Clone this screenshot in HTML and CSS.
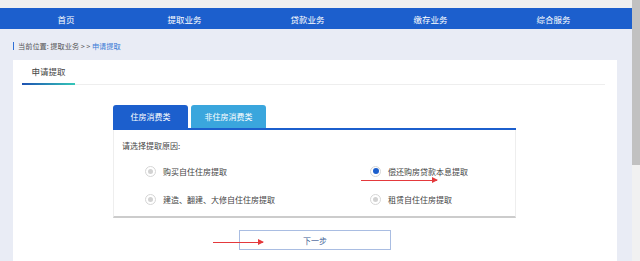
FILE: index.html
```html
<!DOCTYPE html>
<html lang="zh-CN">
<head>
  <meta charset="UTF-8">
  <meta name="viewport" content="width=device-width, initial-scale=1.0">
  <title>申请提取</title>
  <link rel="stylesheet" href="styles.css">
</head>
<body>
<div class="page">
  <div class="topbar"></div>
  <div class="nav">
    <a class="nav-item">首页</a>
    <a class="nav-item">提取业务</a>
    <a class="nav-item">贷款业务</a>
    <a class="nav-item">缴存业务</a>
    <a class="nav-item">综合服务</a>
  </div>

  <div class="crumb">
    <span class="crumb-mark"></span>
    <span>当前位置: 提取业务 &gt; &gt; </span><span class="crumb-current">申请提取</span>
  </div>

  <div class="panel">
    <div class="panel-tabs">
      <span class="panel-tab">申请提取</span>
    </div>

    <div class="form">
      <div class="cat-tabs">
        <span class="cat-tab active">住房消费类</span>
        <span class="cat-tab">非住房消费类</span>
      </div>
      <div class="cat-box">
        <div class="prompt">请选择提取原因:</div>
        <div class="options">
          <label class="option"><span class="radio"></span>购买自住住房提取</label>
          <label class="option"><span class="radio checked"></span>偿还购房贷款本息提取</label>
          <label class="option"><span class="radio"></span>建造、翻建、大修自住住房提取</label>
          <label class="option"><span class="radio"></span>租赁自住住房提取</label>
        </div>
      </div>
      <button class="next-btn">下一步</button>

      <!-- annotation arrows drawn over the form -->
      <span class="arrow arrow-option"></span>
      <span class="arrow arrow-next"></span>
    </div>
  </div>
</div>
<div class="scrollbar"><div class="scroll-thumb"></div></div>
</body>
</html>
```

FILE: styles.css
```css
html, body {
  margin: 0;
  height: 261px;
  overflow: hidden;
}
body {
  display: flex;
  background: #e9ecf5;
  font-family: "Noto Sans CJK SC", "Noto Sans", sans-serif;
  font-size: 8px;
  color: #444;
}
.page {
  flex: 1;
  display: flex;
  flex-direction: column;
}
.topbar {
  height: 8px;
  background: #f0f0f0;
}
.nav {
  height: 21px;
  background: #1c5fcd;
  display: flex;
  align-items: center;
  padding-left: 6px;
}
.nav-item {
  width: 123px;
  text-align: center;
  color: #fff;
  font-size: 8.5px;
}
.nav-item:first-child {
  width: 114px;
  margin-left: 3px;
}
.crumb {
  height: 31px;
  display: flex;
  align-items: center;
  padding-left: 13px;
  padding-top: 3px;
  box-sizing: border-box;
  color: #555;
  font-size: 7.2px;
  white-space: pre;
}
.crumb-mark {
  width: 1px;
  height: 8px;
  background: #2f6fd6;
  margin-right: 4px;
}
.crumb-current {
  color: #3a7bd5;
}
.panel {
  flex: 1;
  background: #fff;
  margin-left: 13px;
  width: 604px;
  position: relative;
}
.panel-tabs {
  height: 24px;
  margin: 0 12px 0 9px;
  border-bottom: 1px solid #eeeeee;
  display: flex;
  align-items: flex-end;
}
.panel-tab {
  width: 53px;
  text-align: center;
  font-size: 8.5px;
  color: #444;
  padding-bottom: 6px;
  margin-bottom: -1px;
  border-bottom: 2px solid transparent;
  border-image: linear-gradient(90deg, #1d4fb2, #35c9b8) 1;
}
.form {
  position: relative;
  margin: 20px 0 0 100px;
  width: 403px;
}
.cat-tabs {
  display: flex;
  gap: 3px;
  border-bottom: 2px solid #1c5fcd;
}
.cat-tab {
  width: 75px;
  height: 23px;
  line-height: 23px;
  text-align: center;
  color: #fff;
  background: #3aa6dd;
  border-radius: 3px 3px 0 0;
}
.cat-tab.active {
  background: #1c5fcd;
}
.cat-box {
  border: 1px solid #eeeeee;
  border-top: none;
  border-bottom: 2px solid #cccccc;
  padding: 10px 0 3px 8px;
}
.prompt {
  line-height: 12px;
  margin-bottom: 5px;
}
.options {
  display: grid;
  grid-template-columns: 225px 1fr;
  padding-left: 23px;
}
.option {
  display: flex;
  align-items: center;
  height: 28px;
}
.radio {
  width: 9px;
  height: 9px;
  border: 1px solid #d6d6d6;
  border-radius: 50%;
  margin-right: 7px;
  display: flex;
  align-items: center;
  justify-content: center;
}
.radio::after {
  content: "";
  width: 5px;
  height: 5px;
  border-radius: 50%;
  background: #d2d2d2;
}
.radio.checked::after {
  width: 6px;
  height: 6px;
  background: #1c5fcd;
}
.next-btn {
  display: block;
  margin: 12px 0 0 126px;
  width: 152px;
  height: 20px;
  border: 1px solid #a9bde2;
  background: #fff;
  color: #3d5d95;
  font-family: inherit;
  font-size: 8px;
  padding: 0;
}
.arrow {
  position: absolute;
  height: 1px;
  background: #e4393c;
}
.arrow::after {
  content: "";
  position: absolute;
  right: -1px;
  top: -3px;
  border-left: 6px solid #e4393c;
  border-top: 3.5px solid transparent;
  border-bottom: 3.5px solid transparent;
}
.arrow-option {
  left: 248px;
  top: 75px;
  width: 76px;
}
.arrow-next {
  left: 100px;
  top: 137px;
  width: 50px;
}
.scrollbar {
  width: 8px;
  background: #f1f1f1;
}
.scroll-thumb {
  height: 165px;
  background: #c1c1c1;
}
```
